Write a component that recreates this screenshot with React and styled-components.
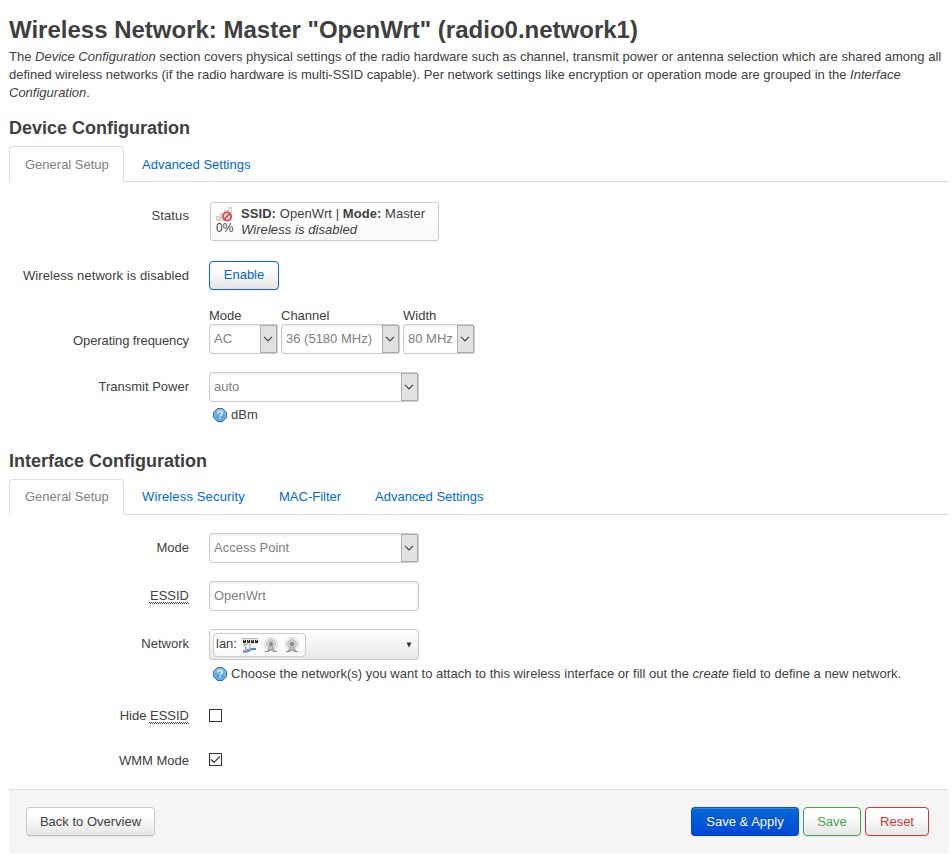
import styled, { createGlobalStyle } from "styled-components";

const GlobalCss = createGlobalStyle`
  * {
    box-sizing: border-box;
  }

  body {
    margin: 0;
    background: #fff;
    color: #404040;
    font-family: "Liberation Sans", Arial, sans-serif;
    font-size: 13px;
    line-height: 18px;
  }
`;

const PageCss = styled.div`
  width: 940px;
  margin-left: 9px;
  padding-top: 12px;
`;

const Title = styled.h2`
  margin: 0;
  font-size: 24px;
  line-height: 36px;
  white-space: nowrap;
`;

const SubTitle = styled.h3`
  margin: 0;
  padding-top: ${(p) => p.$top}px;
  font-size: 18px;
  line-height: 36px;
`;

const Desc = styled.div`
  p {
    margin: 0;
    white-space: nowrap;
  }
`;

const TabMenu = styled.ul`
  display: flex;
  height: 36px;
  margin: 0;
  padding: 0;
  list-style: none;
  border-bottom: 1px solid #ddd;
`;

const Tab = styled.li`
  height: ${(p) => (p.$active ? 36 : 35)}px;
  width: ${(p) => p.$w}px;
  padding: ${(p) => p.$pad || 9}px 0 0 15px;
  white-space: nowrap;
  letter-spacing: ${(p) => p.$spacing || 0}px;
  color: ${(p) => (p.$active ? "#808080" : "#0069d6")};
  background: #fff;
  border: 1px solid ${(p) => (p.$active ? "#ddd" : "transparent")};
  border-bottom: none;
  border-radius: 4px 4px 0 0;
  margin-right: 2px;
`;

const Row = styled.div`
  display: flex;
  margin-top: ${(p) => p.$top}px;
  height: ${(p) => p.$h}px;
`;

const Label = styled.label`
  width: 180px;
  flex: none;
  margin-right: 20px;
  padding-top: ${(p) => p.$pad || 0}px;
  text-align: right;
  white-space: nowrap;
  letter-spacing: ${(p) => p.$spacing || 0}px;

  abbr {
    display: inline-block;
    line-height: 14px;
    text-decoration: underline dotted #404040 1px;
    text-underline-offset: 2px;
    border-bottom: 1px dotted #404040;
  }
`;

const Field = styled.div`
  flex: 1;
  white-space: nowrap;
`;

const StatusBox = styled.div`
  display: flex;
  width: 229px;
  height: 39px;
  margin-left: 1px;
  padding: 3px 0 0 5px;
  line-height: 16px;
  border: 1px solid #ccc;
  border-radius: 3px;
  background: linear-gradient(#fff, #fff 25%, #f8f8f8);
  box-shadow: 0 1px 2px rgba(0, 0, 0, 0.05);

  .signal {
    width: 25px;
    font-size: 12px;
    line-height: 12px;
  }

  .info {
    letter-spacing: 0.07px;
  }

  svg {
    display: block;
  }
`;

const Button = styled.button`
  width: ${(p) => p.$w}px;
  height: 29px;
  padding: ${(p) => (p.$low ? "1px 0 0" : "0 0 1px")};
  font: inherit;
  color: ${(p) => p.$color || "#404040"};
  border: 1px solid ${(p) => p.$color || "#ccc"};
  ${(p) => !p.$color && "border-bottom-color: #bbb;"}
  border-radius: 4px;
  background: linear-gradient(#fff, #fff 25%, #e6e6e6);
  box-shadow: inset 0 1px 0 rgba(255, 255, 255, 0.2), 0 1px 2px rgba(0, 0, 0, 0.05);
  white-space: nowrap;
`;

const PrimaryButton = styled(Button)`
  color: #fff;
  border-color: #0050d0 #0050d0 #003fc0;
  background: linear-gradient(#0069d6, #0048d8);
  text-shadow: 0 -1px 0 rgba(0, 0, 0, 0.25);
`;

const FreqGroup = styled.div`
  display: flex;
  gap: 3px;

  .item {
    display: flex;
    flex-direction: column;
  }

  .name {
    height: 18px;
    padding-top: 1px;
  }
`;

const SelectCss = styled.div`
  display: flex;
  width: ${(p) => p.$w}px;
  height: 30px;
  color: #808080;
  border: 1px solid #ccc;
  border-radius: 3px;
  background: #fff;
  box-shadow: inset 0 1px 3px rgba(0, 0, 0, 0.1);

  .value {
    flex: 1;
    padding: 5px 0 0 4px;
  }

  .arrow {
    display: flex;
    flex: none;
    align-items: center;
    width: 17px;
    padding-left: 2px;
    border: 1px solid #adadad;
    background: #e1e1e1;
  }
`;

const TextInput = styled.input`
  display: block;
  width: 210px;
  height: 30px;
  padding: 0 4px 2px;
  font: inherit;
  color: #808080;
  border: 1px solid #ccc;
  border-radius: 3px;
  box-shadow: inset 0 1px 3px rgba(0, 0, 0, 0.1);
`;

const NetworkSelect = styled.div`
  display: flex;
  align-items: center;
  justify-content: space-between;
  width: 210px;
  height: 31px;
  padding: 0 6px 0 3px;
  border: 1px solid #ccc;
  border-radius: 3px;
  background: linear-gradient(#fff, #e9e8e6);
`;

const NetworkBadge = styled.div`
  display: flex;
  align-items: center;
  width: 93px;
  height: 24px;
  padding: 0 0 1px 2px;
  border: 1px solid #ccc;
  border-radius: 4px;
  background: linear-gradient(#fff, #fff 25%, #f8f8f8);

  svg {
    margin: 2px 0 0 5px;
  }
`;

const Help = styled.div`
  display: flex;
  align-items: center;
  height: 18px;
  padding-left: 4px;
  margin-top: ${(p) => p.$top}px;
  letter-spacing: 0.015px;

  svg {
    flex: none;
    margin-right: 4px;
  }
`;

const CheckBoxCss = styled.div`
  display: flex;
  align-items: center;
  justify-content: center;
  width: 13px;
  height: 13px;
  margin-top: 2px;
  border: 1px solid #333;
  background: #fff;
`;

const Actions = styled.div`
  display: flex;
  gap: 4px;
  height: 65px;
  margin-top: 20px;
  padding: 17px 20px 0 17px;
  border-top: 1px solid #ddd;
  border-radius: 0 0 3px 3px;
  background: #f5f5f5;

  .back {
    flex: 1;
  }
`;

const Select = ({ value, width }) => (
  <SelectCss $w={width}>
    <div className="value">{value}</div>
    <div className="arrow">
      <svg width="10" height="6" viewBox="0 0 10 6" fill="none" stroke="#444" strokeWidth="1.2">
        <path d="M1 .8L5 4.8L9 .8" />
      </svg>
    </div>
  </SelectCss>
);

const CheckBox = ({ checked }) => (
  <CheckBoxCss>
    {checked && (
      <svg width="11" height="11" viewBox="0 0 11 11">
        <path d="M1 5.500L4 8.300L10 2.300" fill="none" stroke="#333" strokeWidth="1.200" />
      </svg>
    )}
  </CheckBoxCss>
);

const HelpIcon = () => (
  <svg width="14" height="14" viewBox="0 0 14 14">
    <defs>
      <linearGradient id="helpFill" x1="0" y1="0" x2="0" y2="1">
        <stop offset="0" stopColor="#7db9ec" />
        <stop offset="1" stopColor="#4c9be0" />
      </linearGradient>
    </defs>
    <path d="M4.300 .6h5.400l3.700 3.700v5.400l-3.700 3.700H4.300L.6 9.700V4.300z" fill="url(#helpFill)" stroke="#2b65a5" />
    <path d="M4.700 1.700h4.600l3 3v4.600l-3 3H4.700l-3-3V4.700z" fill="none" stroke="#9fcef3" strokeWidth=".6" />
    <path d="M4.900 5.600c0-1.500 1-2.200 2.200-2.200s2.100.7 2.100 1.800c0 1.500-2 1.500-2 3.200" fill="none" stroke="#fff" strokeWidth="1.300" />
    <path d="M6.400 9.400h1.500v1.400H6.400z" fill="#fff" />
  </svg>
);

const SignalIcon = () => (
  <svg width="17" height="16" viewBox="0 0 17 16">
    <path d="M0 10h4v5H0zM4 7h4v8H4zM8 4h4v11H8zM12 1h4v14h-4z" fill="#cbcdc8" />
    <path d="M.8 10.800h2.600v3.400H.8zM4.800 7.800h2.600v6.400H4.800zM8.800 4.800h2.600v9.400H8.800zM12.800 1.800h2.600v12.400h-2.600z" fill="#e3e5e1" />
    <circle cx="11" cy="10.500" r="4.100" fill="#eadcda" stroke="#cc4f4c" strokeWidth="1.800" />
    <path d="M8.200 13.200L13.800 7.800" stroke="#cc4f4c" strokeWidth="1.700" />
  </svg>
);

const SwitchIcon = () => (
  <svg width="16" height="16" viewBox="0 0 16 16">
    <path d="M0 1h16v6H0z" fill="#ecece4" />
    <path d="M0 1.500h16" stroke="#b5b5b5" />
    <path d="M1 3h3v3H1zM5 3h3v3H5zM9 3h3v3H9zM13 3h3v3h-3z" fill="#2c2c24" />
    <path d="M2 3h1v1H2zM6 3h1v1H6zM10 3h1v1h-1zM14 3h1v1h-1z" fill="#d8c860" />
    <path d="M1.500 7.500h3l1.500-2 2 2v3l-2 2H3.500v-3z" fill="#eee" stroke="#999" />
    <path d="M1 14.500h3.500c3.500 0 3-2.500 6-2.500H14" fill="none" stroke="#5583c0" strokeWidth="1.800" />
  </svg>
);

const WifiIcon = () => (
  <svg width="16" height="16" viewBox="0 0 16 16" fill="none">
    <circle cx="8" cy="7" r="6.500" fill="#f0f0f0" stroke="#d8d8d8" />
    <circle cx="8" cy="7" r="4.300" fill="#ddd" stroke="#b5b5b5" />
    <circle cx="8" cy="7" r="2" fill="#888" stroke="#999" />
    <path d="M8 8L4.500 14M8 8l3.500 6M5.500 12L11 14M10.500 12L5 14" stroke="#999" />
    <path d="M2 14.500h4M10 14.500h4" stroke="#888" />
  </svg>
);

const freqList = [
  { name: "Mode", value: "AC", width: 69 },
  { name: "Channel", value: "36 (5180 MHz)", width: 119 },
  { name: "Width", value: "80 MHz", width: 72 },
];

const App = () => {
  return (
    <>
      <GlobalCss />
      <PageCss>
        <Title>Wireless Network: Master "OpenWrt" (radio0.network1)</Title>
        <Desc>
          <p>The <em>Device Configuration</em> section covers physical settings of the radio hardware such as channel, transmit power or antenna selection which are shared among all</p>
          <p>defined wireless networks (if the radio hardware is multi-SSID capable). Per network settings like encryption or operation mode are grouped in the <em>Interface</em></p>
          <p><em>Configuration</em>.</p>
        </Desc>

        <SubTitle $top={8}>Device Configuration</SubTitle>
        <TabMenu>
          <Tab $active $w={115}>General Setup</Tab>
          <Tab $w={140}>Advanced Settings</Tab>
        </TabMenu>

        <Row $top={20} $h={39}>
          <Label $pad={5} $spacing={0.12}>Status</Label>
          <Field>
            <StatusBox>
              <div className="signal">
                <SignalIcon />
                0%
              </div>
              <div className="info">
                <strong>SSID:</strong> OpenWrt | <strong>Mode:</strong> Master
                <br />
                <em>Wireless is disabled</em>
              </div>
            </StatusBox>
          </Field>
        </Row>
        <Row $top={20} $h={29}>
          <Label $pad={6} $spacing={0.07}>Wireless network is disabled</Label>
          <Field>
            <Button $w={70} $color="#0069d6">Enable</Button>
          </Field>
        </Row>
        <Row $top={16} $h={48}>
          <Label $pad={26} $spacing={-0.1}>Operating frequency</Label>
          <Field>
            <FreqGroup>
              {freqList.map((item) => (
                <div className="item" key={item.name}>
                  <span className="name">{item.name}</span>
                  <Select value={item.value} width={item.width} />
                </div>
              ))}
            </FreqGroup>
          </Field>
        </Row>
        <Row $top={18} $h={51}>
          <Label $pad={6}>Transmit Power</Label>
          <Field>
            <Select value="auto" width={210} />
            <Help $top={4}><HelpIcon />dBm</Help>
          </Field>
        </Row>

        <SubTitle $top={20}>Interface Configuration</SubTitle>
        <TabMenu>
          <Tab $active $w={115} $pad={8}>General Setup</Tab>
          <Tab $w={135} $pad={8} $spacing={0.15}>Wireless Security</Tab>
          <Tab $w={94} $pad={8}>MAC-Filter</Tab>
          <Tab $w={140} $pad={8}>Advanced Settings</Tab>
        </TabMenu>

        <Row $top={18} $h={30}>
          <Label $pad={6}>Mode</Label>
          <Field><Select value="Access Point" width={210} /></Field>
        </Row>
        <Row $top={18} $h={30}>
          <Label $pad={6}><abbr>ESSID</abbr></Label>
          <Field><TextInput defaultValue="OpenWrt" /></Field>
        </Row>
        <Row $top={18} $h={53}>
          <Label $pad={6}>Network</Label>
          <Field>
            <NetworkSelect>
              <NetworkBadge>
                lan:
                <SwitchIcon />
                <WifiIcon />
                <WifiIcon />
              </NetworkBadge>
              <svg width="6" height="6" viewBox="0 0 6 6"><path d="M.5 .5h5L3 5.500z" fill="#333" /></svg>
            </NetworkSelect>
            <Help $top={5}>
              <HelpIcon />
              <span>Choose the network(s) you want to attach to this wireless interface or fill out the <em>create</em> field to define a new network.</span>
            </Help>
          </Field>
        </Row>
        <Row $top={25} $h={16}>
          <Label>Hide <abbr>ESSID</abbr></Label>
          <Field><CheckBox /></Field>
        </Row>
        <Row $top={28} $h={18}>
          <Label $pad={1}>WMM Mode</Label>
          <Field><CheckBox checked /></Field>
        </Row>

        <Actions>
          <div className="back"><Button $w={129} $low>Back to Overview</Button></div>
          <PrimaryButton $w={108} $low>Save &amp; Apply</PrimaryButton>
          <Button $w={58} $low $color="#46a546">Save</Button>
          <Button $w={64} $low $color="#c43c35">Reset</Button>
        </Actions>
      </PageCss>
    </>
  );
};

export default App;
